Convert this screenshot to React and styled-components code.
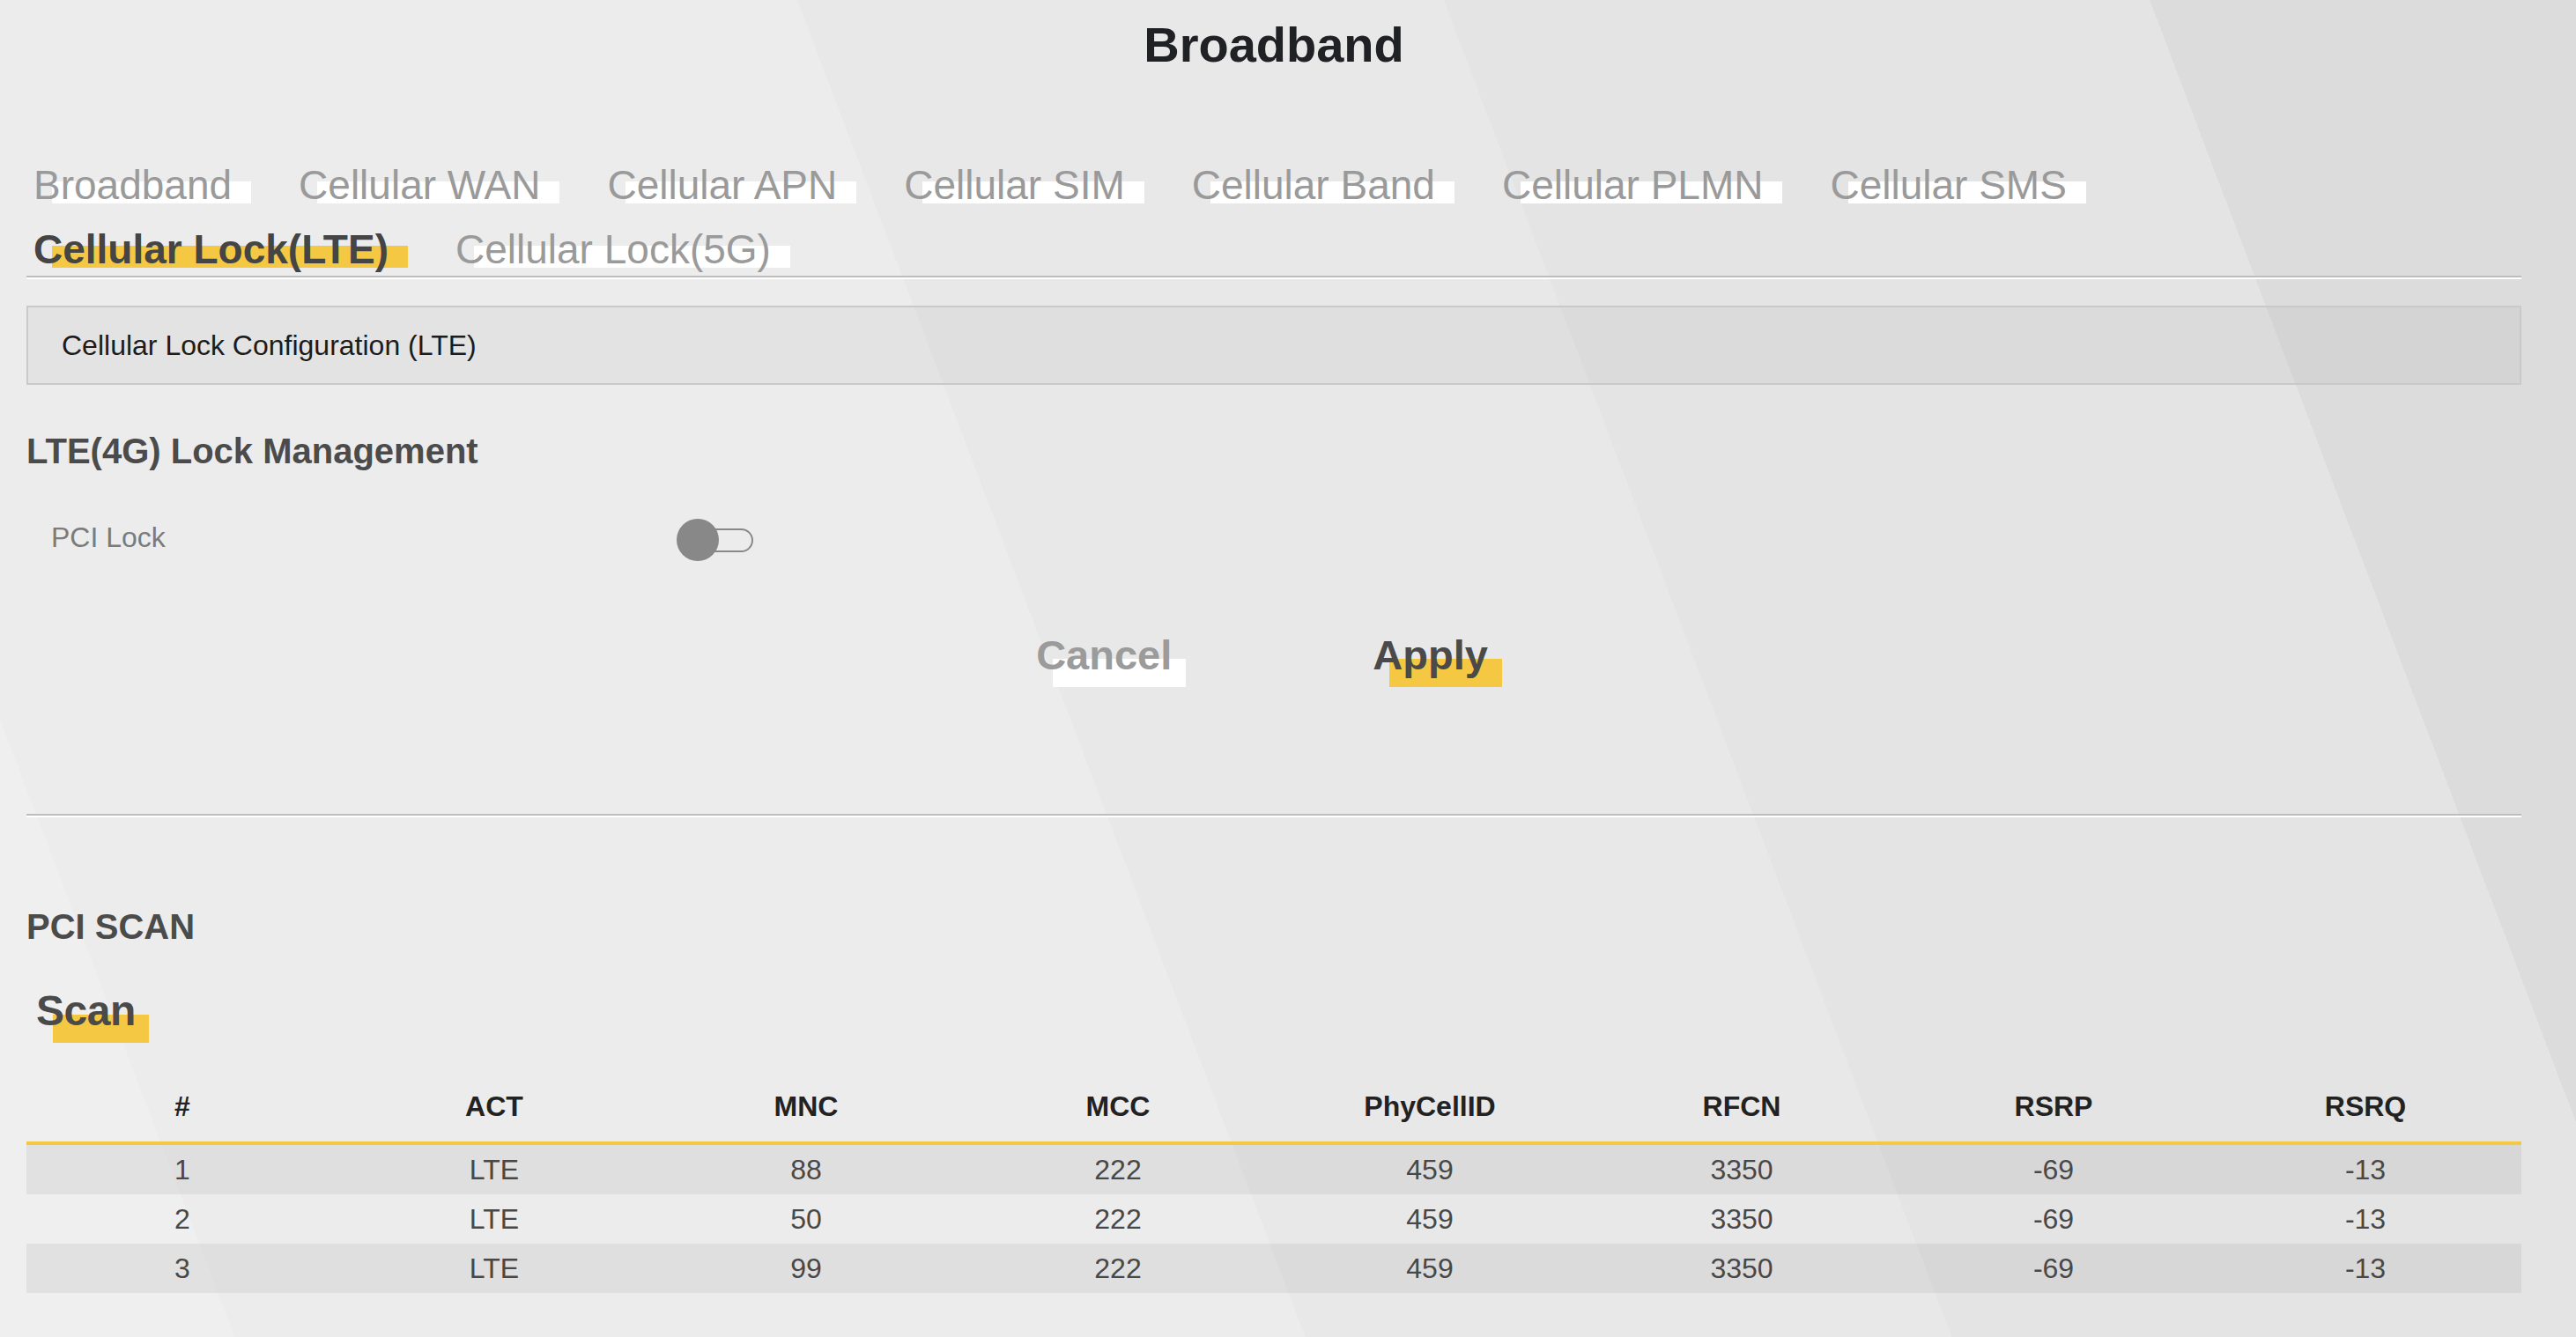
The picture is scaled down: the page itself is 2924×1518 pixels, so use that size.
import React, { useState } from "react";
import styled, { createGlobalStyle } from "styled-components";

const yellow = "#f5c843";

const GlobalStyle = createGlobalStyle`
  body {
    margin: 0;
    font-family: "Liberation Sans", Arial, sans-serif;
  }
`;

// diagonal light stripes behind everything
const Page = styled.div`
  min-height: 100vh;
  box-sizing: border-box;
  padding: 0 62px 40px 30px;
  font-family: "Liberation Sans", Arial, sans-serif;
  background: linear-gradient(
    69.2deg,
    #efefef 0 249px,
    #ececec 249px 1385px,
    #e8e8e8 1385px 2071px,
    #e4e4e4 2071px 2820px,
    #dcdcdc 2820px
  );
`;

const Title = styled.h1`
  margin: 0;
  padding-top: 19px;
  font-size: 56px;
  line-height: 64px;
  font-weight: 700;
  text-align: center;
  color: #202124;
`;

const TabList = styled.nav`
  display: flex;
  flex-wrap: wrap;
  column-gap: 54px;
  row-gap: 13px;
  max-width: 2500px;
  margin-top: 97px;
  padding-left: 8px;
`;

const Tab = styled.span`
  position: relative;
  isolation: isolate;
  padding-right: 22px;
  font-size: 46px;
  line-height: 60px;
  white-space: nowrap;
  cursor: pointer;
  color: ${(p) => (p.$active ? "#454545" : "#9a9a9a")};
  font-weight: ${(p) => (p.$active ? 700 : 400)};

  &::before {
    content: "";
    position: absolute;
    z-index: -1;
    left: 21px;
    right: 0;
    top: 26px;
    height: 25px;
    background: ${(p) => (p.$active ? yellow : "#fff")};
  }
`;

const Divider = styled.hr`
  height: 0;
  margin: ${(p) => p.$top || 0}px 0 0;
  border: 0;
  border-top: 2px solid #bdbdbd;
  border-bottom: 2px solid #fff;
`;

const ConfigBar = styled.div`
  display: flex;
  align-items: center;
  height: 90px;
  box-sizing: border-box;
  margin-top: 30px;
  padding-left: 38px;
  border: 2px solid #c9c9c9;
  background: rgba(0, 0, 0, 0.035);
  font-size: 32px;
  color: #1c1c1c;
`;

const SectionHeading = styled.h2`
  margin: ${(p) => p.$top}px 0 0;
  font-size: 40px;
  line-height: 48px;
  font-weight: 700;
  color: #4b4b4b;
`;

const FieldRow = styled.div`
  display: flex;
  align-items: center;
  height: 48px;
  margin-top: 53px;
  padding-left: 28px;
`;

const FieldLabel = styled.label`
  width: 710px;
  margin-bottom: 7px;
  font-size: 32px;
  line-height: 40px;
  color: #7b7b7b;
`;

const Switch = styled.button`
  position: relative;
  display: flex;
  align-items: center;
  width: 88px;
  height: 48px;
  padding: 0;
  border: 0;
  background: none;
  cursor: pointer;
`;

const SwitchTrack = styled.span`
  width: 80px;
  height: 27px;
  margin-left: 7px;
  box-sizing: border-box;
  border: 2px solid #888;
  border-radius: 14px;
  background: ${(p) => (p.$on ? yellow : "transparent")};
`;

const SwitchKnob = styled.span`
  position: absolute;
  top: 0;
  left: ${(p) => (p.$on ? "40px" : "0")};
  width: 48px;
  height: 48px;
  border-radius: 50%;
  background: #888;
`;

const ButtonRow = styled.div`
  display: flex;
  justify-content: center;
  gap: 212px;
  margin-top: 79px;
  padding-right: 11px;
`;

const ScanBar = styled.div`
  display: flex;
  margin-top: 44px;
  padding-left: 11px;
`;

const TextButton = styled.button`
  position: relative;
  isolation: isolate;
  margin: 0;
  padding: 0 ${(p) => p.$pad || 16}px 0 0;
  border: 0;
  background: none;
  font-family: inherit;
  font-size: ${(p) => p.$size || 47}px;
  line-height: 56px;
  font-weight: 700;
  letter-spacing: ${(p) => p.$spacing || "0"};
  color: ${(p) => (p.$primary ? "#4a4a4a" : "#9b9b9b")};
  cursor: pointer;

  &::before {
    content: "";
    position: absolute;
    z-index: -1;
    left: 19px;
    right: 0;
    top: 32px;
    height: 32px;
    background: ${(p) => (p.$primary ? yellow : "#fff")};
  }
`;

const ScanTable = styled.table`
  width: 100%;
  margin-top: 36px;
  table-layout: fixed;
  border-collapse: collapse;
`;

const HeadCell = styled.th`
  padding: 24px 0 20px;
  border-bottom: 4px solid ${yellow};
  font-size: 32px;
  line-height: 40px;
  font-weight: 700;
  color: #222;
  text-align: center;
`;

const BodyRow = styled.tr`
  background: ${(p) => (p.$striped ? "rgba(0, 0, 0, 0.055)" : "transparent")};
`;

const Cell = styled.td`
  height: 56px;
  padding: 0;
  font-size: 32px;
  line-height: 56px;
  color: #484848;
  text-align: center;
`;

const tabs = [
  "Broadband",
  "Cellular WAN",
  "Cellular APN",
  "Cellular SIM",
  "Cellular Band",
  "Cellular PLMN",
  "Cellular SMS",
  "Cellular Lock(LTE)",
  "Cellular Lock(5G)",
];

const columns = ["#", "ACT", "MNC", "MCC", "PhyCellID", "RFCN", "RSRP", "RSRQ"];

const cells = [
  ["1", "LTE", "88", "222", "459", "3350", "-69", "-13"],
  ["2", "LTE", "50", "222", "459", "3350", "-69", "-13"],
  ["3", "LTE", "99", "222", "459", "3350", "-69", "-13"],
];

export default function App() {
  const [active, setActive] = useState("Cellular Lock(LTE)");
  const [pciLock, setPciLock] = useState(false);

  return (
    <Page>
      <GlobalStyle />
      <Title>Broadband</Title>

      <TabList>
        {tabs.map((t) => (
          <Tab key={t} $active={t === active} onClick={() => setActive(t)}>
            {t}
          </Tab>
        ))}
      </TabList>
      <Divider />

      <ConfigBar>Cellular Lock Configuration (LTE)</ConfigBar>

      <SectionHeading $top={51}>LTE(4G) Lock Management</SectionHeading>
      <FieldRow>
        <FieldLabel>PCI Lock</FieldLabel>
        <Switch role="switch" aria-checked={pciLock} onClick={() => setPciLock(!pciLock)}>
          <SwitchTrack $on={pciLock} />
          <SwitchKnob $on={pciLock} />
        </Switch>
      </FieldRow>

      <ButtonRow>
        <TextButton>Cancel</TextButton>
        <TextButton $primary>Apply</TextButton>
      </ButtonRow>

      <Divider $top={152} />

      <SectionHeading $top={100}>PCI SCAN</SectionHeading>
      <ScanBar>
        <TextButton $primary $size={48} $pad={15} $spacing="-0.5px">
          Scan
        </TextButton>
      </ScanBar>

      <ScanTable>
        <thead>
          <tr>
            {columns.map((c) => (
              <HeadCell key={c}>{c}</HeadCell>
            ))}
          </tr>
        </thead>
        <tbody>
          {cells.map((row, i) => (
            <BodyRow key={row[0]} $striped={i % 2 === 0}>
              {row.map((v, j) => (
                <Cell key={j}>{v}</Cell>
              ))}
            </BodyRow>
          ))}
        </tbody>
      </ScanTable>
    </Page>
  );
}
